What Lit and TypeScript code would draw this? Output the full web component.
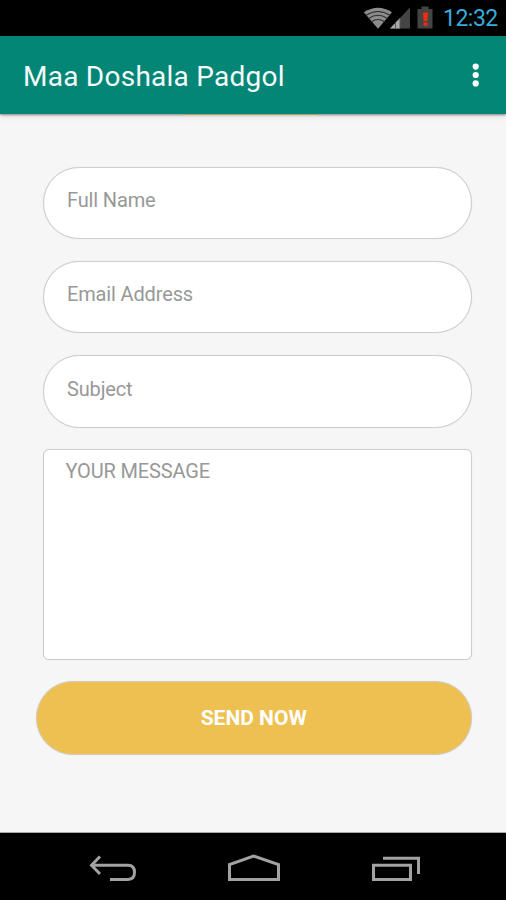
import { LitElement, html, css, svg } from "lit";
import { customElement } from "lit/decorators.js";

@customElement("status-bar")
class StatusBar extends LitElement {
  static styles = css`
    :host { display: flex; height: 36px; flex: none; background: #000; justify-content: flex-end; }
    .icons { flex: none; width: 80px; height: 36px; }
    .time { width: 63px; color: #37addc; font: 23px/37px Roboto, sans-serif; letter-spacing: -0.5px; white-space: nowrap; }
  `;
  render() {
    return html`
      <svg class="icons" viewBox="363 0 80 36">
        <path d="M363.8 12.2Q378 3.200 392 12.200L378 28.700Z" fill="#8c8c8c" />
        <g fill="none" stroke="#303030" stroke-width="1.100">
          <path d="M366 15.200Q378 7.700 390 15.200" />
          <path d="M368.500 18.500Q378 12 387.500 18.500" />
          <path d="M371.500 21.800Q378 17.200 384.500 21.800" />
        </g>
        <path d="M410 7.500V28.500H390Z" fill="#444" />
        <path d="M400 18V28.500H390Z" fill="#aaa" />
        <path d="M395.500 22V28.500M400 18V28.500" stroke="#555" stroke-width="1" />
        <path d="M421.500 6.500H428.500V9H432.500V28.500H417.500V9H421.500Z" fill="#444" />
        <path d="M423 12.500H428L427.300 21H423.700ZM423.500 22.500H427.500V25.700H423.500Z" fill="#f02c10" />
      </svg>
      <span class="time">12:32</span>
    `;
  }
}

@customElement("app-bar")
class AppBar extends LitElement {
  static styles = css`
    :host {
      display: flex; flex: none; align-items: center; justify-content: space-between;
      height: 78px; padding: 0 20px 0 23px; box-sizing: border-box; position: relative; z-index: 1;
      background: #038676; box-shadow: 0 1px 2px rgba(0,0,0,.4), 0 2px 6px rgba(0,0,0,.12);
    }
    .title { margin: 4px 0 0; color: #f4fbfa; font: 400 28px/36px Roboto, sans-serif; letter-spacing: 0.25px; white-space: nowrap; }
    .menu { width: 20px; height: 30px; }
  `;
  render() {
    return html`
      <h1 class="title">Maa Doshala Padgol</h1>
      <svg class="menu" viewBox="0 0 20 30" fill="#fff">
        <circle cx="9.700" cy="6.600" r="3.100" /><circle cx="9.700" cy="15" r="3.100" /><circle cx="9.700" cy="23.400" r="3.100" />
      </svg>
    `;
  }
}

@customElement("contact-form")
class ContactForm extends LitElement {
  static styles = css`
    :host { display: flex; flex: 1; flex-direction: column; background: #f6f6f6; border-bottom: 1px solid #aaa; }
    .accent { width: 133px; height: 2px; margin-left: 184px; background: linear-gradient(#b3a06d 50%, #d8cfc0 50%); position: relative; z-index: 2; }
    form { display: flex; flex-direction: column; padding: 50.500px 34.500px 0 43px; }
    .field, .message, .send { box-sizing: border-box; margin: 0; outline: 0; font: 20px/24px Roboto, sans-serif; border: 1px solid #cecece; box-shadow: 0 0 1px rgba(0,0,0,.14); background: #fff; }
    .field { width: 100%; height: 72.500px; margin-bottom: 21.800px; border-radius: 37px; padding: 0 23px 5.500px; }
    .message { height: 211px; border-radius: 6px; padding: 8.500px 21.500px; resize: none; overflow: hidden; }
    ::placeholder { color: #989898; opacity: 1; letter-spacing: -0.150px; }
    .send { height: 74px; margin: 21px 0 0 -7px; border-radius: 37px; background: #eec051; color: #fff; font-size: 21px; font-weight: 700; padding: 0 0 1px; border-color: #d2cbb8; }
  `;
  render() {
    return html`
      <div class="accent"></div>
      <form>
        ${["Full Name", "Email Address", "Subject"].map((label) => html`<input class="field" placeholder=${label} />`)}
        <textarea class="message" placeholder="YOUR MESSAGE"></textarea>
        <button class="send" type="button">SEND NOW</button>
      </form>
    `;
  }
}

const navIcons = [
  svg`<path d="M30 6.500L21.500 15.200L30 24M21.500 15.200H58Q64.500 15.200 64.500 22.300Q64.500 29.400 58 29.400H40" />`,
  svg`<path d="M18.500 29.500V14.500L42.500 6L67.500 14.500V29.500Z" />`,
  svg`<path d="M21.500 15.200H58.500V29.400H21.500ZM31 8.200H66.500V24" />`,
];

@customElement("nav-bar")
class NavBar extends LitElement {
  static styles = css`
    :host { display: flex; flex: none; height: 67px; background: #000; justify-content: space-between; padding: 0 68px 0 70px; box-sizing: border-box; }
    .icon { width: 86px; height: 36px; margin-top: 17px; fill: none; stroke: #a2a2a2; stroke-width: 3; }
  `;
  render() {
    return navIcons.map((icon) => html`<svg class="icon" viewBox="0 0 86 36">${icon}</svg>`);
  }
}

@customElement("app-root")
class AppRoot extends LitElement {
  static styles = css`
    :host { display: flex; flex-direction: column; width: 506px; height: 900px; overflow: hidden; }
  `;
  render() {
    return html`<status-bar></status-bar><app-bar></app-bar><contact-form></contact-form><nav-bar></nav-bar>`;
  }
}
